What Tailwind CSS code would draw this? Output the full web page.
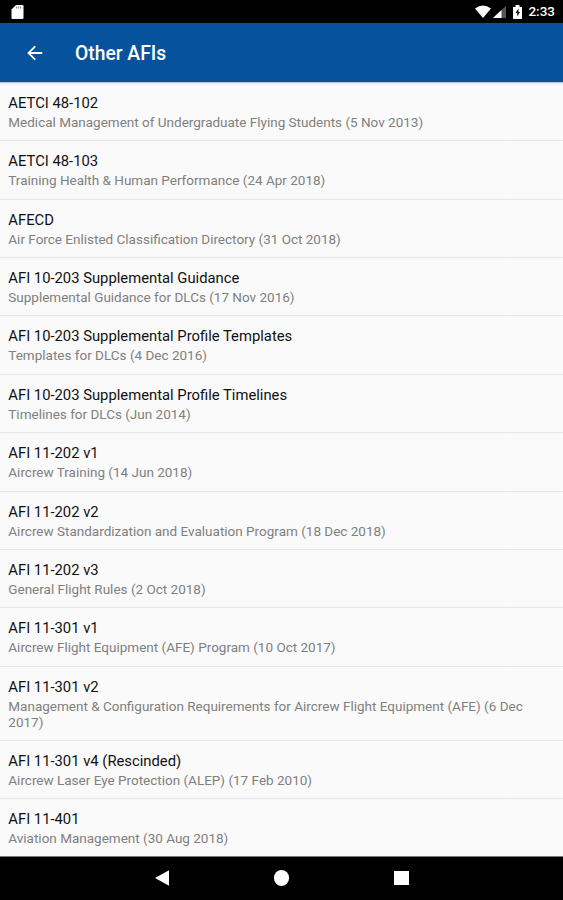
<!DOCTYPE html>
<html lang="en">
<head>
<meta charset="utf-8">
<title>Other AFIs</title>
<script src="https://cdn.jsdelivr.net/npm/@tailwindcss/browser@4"></script>
</head>
<body class="bg-black">
<div class="flex h-[900px] w-[563px] flex-col overflow-hidden bg-[#fafafa] font-[Roboto,sans-serif]">
  <header class="flex h-[23px] shrink-0 items-center justify-between bg-black pr-[8px] pl-[11px] text-white">
    <svg class="h-[14px] w-[13px]" viewBox="0 0 13 14" fill="#fff"><path d="M5 0h6.500a1 1 0 0 1 1 1v12a1 1 0 0 1-1 1H1.500a1 1 0 0 1-1-1V4.500z"/><path d="M5.500 1.500v2M7.500 1.500v2M9.500 1.500v2" stroke="#888" stroke-width="1"/></svg>
    <div class="flex items-center">
      <svg class="h-[14px] w-[53px]" viewBox="0 0 53 14" fill="#fff"><path d="M0 3.500Q8 -2.500 16 3.500L8 13z"/><path d="M31 1v12H18z" fill="#555"/><path d="M26.500 5v8H18z"/><path d="M38 2h2.500V0h4v2H47v12h-9z"/><path d="M43.500 3.500 40.500 8h1.800v3.500L45 7h-1.500z" fill="#111"/></svg>
      <span class="text-[13.500px] leading-[23px] font-medium">2:33</span>
    </div>
  </header>
  <div class="flex h-[59px] shrink-0 items-center bg-[#07529d] pl-[27px] text-white">
    <svg class="h-[16px] w-[16px]" viewBox="0 0 16 16" fill="none" stroke="#fff" stroke-width="1.800"><path d="M15.300 8H1.800M8.200 1.300 1.500 8l6.700 6.700"/></svg>
    <h1 class="ml-[32px] pt-[3px] text-[19.300px] font-medium">Other AFIs</h1>
  </div>
  <main id="list" class="min-h-0 flex-1 overflow-hidden border-t border-[#b8c2ce] bg-linear-to-b from-[#eeeeee] to-[#fafafa] to-[3px]"></main>
  <nav class="flex h-[44px] shrink-0 items-center justify-center gap-[105px] border-t border-[#777] bg-black pb-[1px]">
    <svg class="h-[16px] w-[14px]" viewBox="0 0 14 16" fill="#fff"><path d="M14 .3v15.400L0 8z"/></svg>
    <div class="size-[15.500px] rounded-full bg-white"></div>
    <div class="size-[14.500px] bg-white"></div>
  </nav>
</div>
<script>
const rows = [
  ["AETCI 48-102", "Medical Management of Undergraduate Flying Students (5 Nov 2013)"],
  ["AETCI 48-103", "Training Health & Human Performance (24 Apr 2018)"],
  ["AFECD", "Air Force Enlisted Classification Directory (31 Oct 2018)"],
  ["AFI 10-203 Supplemental Guidance", "Supplemental Guidance for DLCs (17 Nov 2016)"],
  ["AFI 10-203 Supplemental Profile Templates", "Templates for DLCs (4 Dec 2016)"],
  ["AFI 10-203 Supplemental Profile Timelines", "Timelines for DLCs (Jun 2014)"],
  ["AFI 11-202 v1", "Aircrew Training (14 Jun 2018)"],
  ["AFI 11-202 v2", "Aircrew Standardization and Evaluation Program (18 Dec 2018)"],
  ["AFI 11-202 v3", "General Flight Rules (2 Oct 2018)"],
  ["AFI 11-301 v1", "Aircrew Flight Equipment (AFE) Program (10 Oct 2017)"],
  ["AFI 11-301 v2", "Management & Configuration Requirements for Aircrew Flight Equipment (AFE) (6 Dec 2017)"],
  ["AFI 11-301 v4 (Rescinded)", "Aircrew Laser Eye Protection (ALEP) (17 Feb 2010)"],
  ["AFI 11-401", "Aviation Management (30 Aug 2018)"],
];
const list = document.getElementById("list");
for (const [title, detail] of rows) {
  const row = document.createElement("article");
  row.className = "border-b border-[#e6e6e6] pt-[10px] pr-[20px] pb-[10.360px] pl-[8.300px]";
  const h = document.createElement("h2");
  h.className = "text-[14.800px] leading-[21px] text-[#111]";
  h.textContent = title;
  const p = document.createElement("p");
  p.className = "text-[13.500px] leading-[16px] text-[#808080]";
  p.textContent = detail;
  row.append(h, p);
  list.append(row);
}
</script>
</body>
</html>
